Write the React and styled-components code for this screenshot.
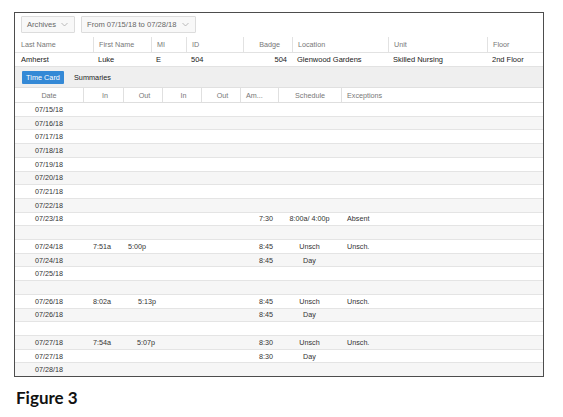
import React from "react";
import styled, { createGlobalStyle } from "styled-components";

const Global = createGlobalStyle`
  html, body { margin: 0; padding: 0; background: #ffffff; }
  body { font-family: "Liberation Sans", Arial, sans-serif; }
`;

const Page = styled.div`
  padding: 12px 0 0 14px;
`;

const Frame = styled.div`
  box-sizing: border-box;
  width: 530px;
  height: 365px;
  border: 1px solid #4d4d4d;
  background: #fff;
  display: flex;
  flex-direction: column;
  overflow: hidden;
`;

const Toolbar = styled.div`
  height: 24px;
  box-sizing: border-box;
  padding: 3px 0 0 6px;
  display: flex;
  gap: 6px;
  align-items: flex-start;
`;

const Dropdown = styled.div`
  box-sizing: border-box;
  width: ${(p) => p.$w}px;
  height: 17px;
  border: 1px solid #dcdcdc;
  background: #f8f8f8;
  border-radius: 1px;
  display: flex;
  align-items: center;
  justify-content: space-between;
  padding: 0 6px 0 5px;
  font-size: 7.6px;
  color: #666;
`;

const Chevron = () => (
  <svg width="7" height="5" viewBox="0 0 7 5">
    <polyline points="0.5,1 3.5,4 6.5,1" fill="none" stroke="#aaa" strokeWidth="0.8" />
  </svg>
);

const InfoRow = styled.div`
  display: grid;
  grid-template-columns: 78px 58px 35px 57px 49px 96px 99px 1fr;
  height: ${(p) => (p.$head ? 16 : 14)}px;
  box-sizing: border-box;
  border-bottom: 1px solid #e2e2e2;
  font-size: ${(p) => (p.$head ? 7.2 : 7.5)}px;
  color: ${(p) => (p.$head ? "#777" : "#222")};
`;

const InfoCell = styled.div`
  display: flex;
  align-items: center;
  justify-content: ${(p) => (p.$right ? "flex-end" : "flex-start")};
  padding: ${(p) => (p.$right ? `0 ${p.$pr}px 0 0` : "0 0 0 5px")};
  border-left: ${(p) => (p.$sep ? "1px solid #e2e2e2" : "none")};
  white-space: nowrap;
  &:first-child { padding-left: 6px; }
`;

const TabBar = styled.div`
  height: 21px;
  box-sizing: border-box;
  background: #efefef;
  display: flex;
  align-items: center;
  padding-left: 7px;
  gap: 10px;
  border-bottom: 1px solid #e0e0e0;
`;

const TabButton = styled.div`
  width: 42px;
  height: 13px;
  background: ${(p) => (p.$active ? "#3489d6" : "transparent")};
  color: ${(p) => (p.$active ? "#fff" : "#222")};
  border-radius: 1px;
  font-size: 7.3px;
  display: flex;
  align-items: center;
  justify-content: ${(p) => (p.$active ? "center" : "flex-start")};
`;

const cols = "68px 40px 39px 39px 39px 38px 63px 1fr";

const HeadRow = styled.div`
  display: grid;
  grid-template-columns: ${cols};
  height: 15px;
  box-sizing: border-box;
  border-bottom: 1px solid #dedede;
  font-size: 7.2px;
  color: #777;
`;

const HeadCell = styled.div`
  display: flex;
  align-items: center;
  justify-content: ${(p) => p.$align || "center"};
  padding-left: ${(p) => p.$pl || 0}px;
  border-left: ${(p) => (p.$sep ? "1px solid #e0e0e0" : "none")};
  white-space: nowrap;
`;

const Body = styled.div`
  flex: 1;
  display: flex;
  flex-direction: column;
`;

const Row = styled.div`
  display: grid;
  grid-template-columns: ${cols};
  flex: 1;
  box-sizing: border-box;
  border-bottom: ${(p) => (p.$last ? "none" : "1px solid #e4e4e4")};
  background: ${(p) => (p.$odd ? "#f6f6f6" : "#fff")};
  font-size: 7.2px;
  color: #333;
`;

const Cell = styled.div`
  display: flex;
  align-items: center;
  justify-content: ${(p) => p.$align || "flex-start"};
  padding-left: ${(p) => p.$pl || 0}px;
  padding-right: ${(p) => p.$pr || 0}px;
  white-space: nowrap;
`;

const Caption = styled.div`
  margin-top: 11px;
  padding-left: 2px;
  font-family: Lato, "Open Sans", sans-serif;
  font-weight: 700;
  font-size: 17px;
  line-height: 20px;
  color: #111;
`;

const rows = [
  { date: "07/15/18" },
  { date: "07/16/18" },
  { date: "07/17/18" },
  { date: "07/18/18" },
  { date: "07/19/18" },
  { date: "07/20/18" },
  { date: "07/21/18" },
  { date: "07/22/18" },
  { date: "07/23/18", am: "7:30", sched: "8:00a/ 4:00p", exc: "Absent" },
  {},
  { date: "07/24/18", in1: "7:51a", out1: "5:00p", outPad: 5, am: "8:45", sched: "Unsch", exc: "Unsch." },
  { date: "07/24/18", am: "8:45", sched: "Day" },
  { date: "07/25/18" },
  {},
  { date: "07/26/18", in1: "8:02a", out1: "5:13p", outPad: 15, am: "8:45", sched: "Unsch", exc: "Unsch." },
  { date: "07/26/18", am: "8:45", sched: "Day" },
  {},
  { date: "07/27/18", in1: "7:54a", out1: "5:07p", outPad: 14, am: "8:30", sched: "Unsch", exc: "Unsch." },
  { date: "07/27/18", am: "8:30", sched: "Day" },
  { date: "07/28/18" },
];

export default function App() {
  return (
    <>
      <Global />
      <Page>
        <Frame>
          <Toolbar>
            <Dropdown $w={54}>
              <span>Archives</span>
              <Chevron />
            </Dropdown>
            <Dropdown $w={115}>
              <span>From 07/15/18 to 07/28/18</span>
              <Chevron />
            </Dropdown>
          </Toolbar>
          <InfoRow $head>
            <InfoCell>Last Name</InfoCell>
            <InfoCell $sep>First Name</InfoCell>
            <InfoCell $sep>MI</InfoCell>
            <InfoCell $sep>ID</InfoCell>
            <InfoCell $sep $right $pr={12}>Badge</InfoCell>
            <InfoCell $sep>Location</InfoCell>
            <InfoCell $sep>Unit</InfoCell>
            <InfoCell $sep>Floor</InfoCell>
          </InfoRow>
          <InfoRow>
            <InfoCell>Amherst</InfoCell>
            <InfoCell>Luke</InfoCell>
            <InfoCell>E</InfoCell>
            <InfoCell>504</InfoCell>
            <InfoCell $right $pr={5}>504</InfoCell>
            <InfoCell>Glenwood Gardens</InfoCell>
            <InfoCell>Skilled Nursing</InfoCell>
            <InfoCell>2nd Floor</InfoCell>
          </InfoRow>
          <TabBar>
            <TabButton $active>Time Card</TabButton>
            <TabButton>Summaries</TabButton>
          </TabBar>
          <HeadRow>
            <HeadCell>Date</HeadCell>
            <HeadCell $sep $pl={3}>In</HeadCell>
            <HeadCell $sep $pl={3}>Out</HeadCell>
            <HeadCell $sep $pl={3}>In</HeadCell>
            <HeadCell $sep $pl={3}>Out</HeadCell>
            <HeadCell $sep $align="flex-start" $pl={5}>Am...</HeadCell>
            <HeadCell $sep>Schedule</HeadCell>
            <HeadCell $sep $align="flex-start" $pl={5}>Exceptions</HeadCell>
          </HeadRow>
          <Body>
            {rows.map((r, i) => (
              <Row key={i} $odd={i % 2 === 1} $last={i === rows.length - 1}>
                <Cell $align="center">{r.date}</Cell>
                <Cell $pl={10}>{r.in1}</Cell>
                <Cell $pl={r.outPad || 5}>{r.out1}</Cell>
                <Cell />
                <Cell />
                <Cell $align="flex-end" $pr={5}>{r.am}</Cell>
                <Cell $align="center">{r.sched}</Cell>
                <Cell $pl={6}>{r.exc}</Cell>
              </Row>
            ))}
          </Body>
        </Frame>
        <Caption>Figure 3</Caption>
      </Page>
    </>
  );
}
